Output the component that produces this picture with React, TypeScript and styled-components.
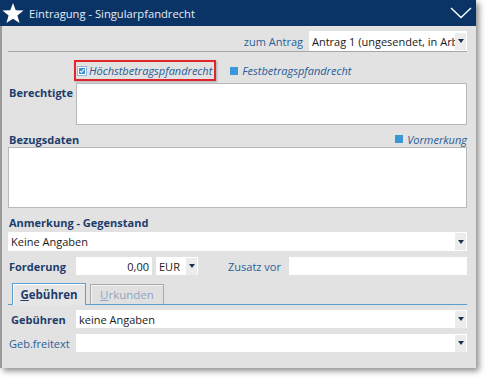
import React from "react";
import styled, { createGlobalStyle } from "styled-components";

const Global = createGlobalStyle`
  html, body { margin: 0; padding: 0; background: #ffffff; }
  body { font-family: "Open Sans", "Noto Sans", sans-serif; }
  * { box-sizing: border-box; }
`;

const Page = styled.div`
  width: 488px;
  height: 380px;
  overflow: hidden;
`;

const Window = styled.div`
  width: 476px;
  height: 368px;
  background: #e2e2e2;
  border-left: 2px solid #9a9a9a;
  box-shadow: 3px 3px 6px rgba(0, 0, 0, 0.45);
  display: flex;
  flex-direction: column;
`;

const Header = styled.div`
  height: 26px;
  flex: none;
  background: #0b3466;
  margin-left: -2px;
  display: flex;
  align-items: center;
  padding: 0 4px 0 2px;
  color: #e4ecf6;
`;

const Title = styled.span`
  font-size: 11.2px;
  margin-left: 5px;
  flex: 1;
`;

const Body = styled.div`
  padding: 5px 9px 0 6px;
  display: flex;
  flex-direction: column;
`;

const TopRow = styled.div`
  display: flex;
  justify-content: flex-end;
  align-items: center;
  gap: 6px;
  height: 21px;
  border-bottom: 1px solid #a6a6a6;
`;

const BlueText = styled.span`
  color: #2a5f98;
  font-size: 11px;
`;

const SelectBox = styled.div<{ $w?: string; $h?: number; $ml?: number }>`
  width: ${(p) => p.$w ?? "auto"};
  flex: ${(p) => (p.$w ? "none" : "1")};
  height: ${(p) => p.$h ?? 19}px;
  margin-left: ${(p) => p.$ml ?? 0}px;
  background: #ffffff;
  display: flex;
  align-items: center;
  font-size: 11px;
  color: #1a1a1a;
  overflow: hidden;
  white-space: nowrap;
`;

const SelectText = styled.span`
  flex: 1;
  min-width: 0;
  padding-left: 3px;
  overflow: hidden;
`;

const DropBtn = styled.span`
  flex: none;
  width: 11px;
  height: 17px;
  margin-right: 1px;
  background: #ececec;
  display: flex;
  align-items: center;
  justify-content: center;
  &::after {
    content: "";
    border-left: 3px solid transparent;
    border-right: 3px solid transparent;
    border-top: 4px solid #1e3350;
  }
`;

const OptionRow = styled.div`
  display: flex;
  align-items: center;
  margin-top: 8px;
  padding-left: 66px;
  height: 21px;
`;

const Highlight = styled.div`
  border: 2px solid #e0262b;
  height: 21px;
  display: flex;
  align-items: center;
  padding: 0 2px 0 0;
  box-shadow: 1px 1px 2px rgba(0, 0, 0, 0.25);
`;

const CheckBox = styled.span`
  width: 8px;
  height: 8px;
  background: #3a8fd0;
  border: 1px solid #ffffff;
  outline: 1px solid #8fb7dc;
  display: inline-flex;
  align-items: center;
  justify-content: center;
  margin: 0 3px 0 2px;
`;

const Square = styled.span`
  width: 8px;
  height: 8px;
  background: #3a98d6;
  display: inline-block;
  margin-right: 4px;
`;

const Italic = styled.span`
  font-style: italic;
  color: #245c98;
  font-size: 11px;
`;

const Option = styled.div<{ $ml?: number }>`
  display: flex;
  align-items: center;
  margin-left: ${(p) => p.$ml ?? 0}px;
`;

const Label = styled.span<{ $bold?: boolean }>`
  font-size: 11px;
  font-weight: ${(p) => (p.$bold ? 700 : 400)};
  color: ${(p) => (p.$bold ? "#1d3d6c" : "#2a5f98")};
  white-space: nowrap;
`;

const FieldRow = styled.div<{ $h: number; $mt: number; $top?: boolean }>`
  display: flex;
  align-items: ${(p) => (p.$top ? "flex-start" : "center")};
  height: ${(p) => p.$h}px;
  margin-top: ${(p) => p.$mt}px;
`;

const LabelCell = styled.div<{ $w?: number; $pt?: number; $ml?: number; $pl?: number }>`
  width: ${(p) => p.$w ?? 68}px;
  flex: none;
  padding-left: ${(p) => p.$pl ?? 1}px;
  margin-left: ${(p) => p.$ml ?? 0}px;
  padding-top: ${(p) => p.$pt ?? 0}px;
  line-height: 14px;
`;

const TextArea = styled.div<{ $h: number }>`
  flex: 1;
  height: ${(p) => p.$h}px;
  background: #ffffff;
  border: 1px solid #b8b8b8;
`;

const SectionHead = styled.div<{ $mt: number }>`
  display: flex;
  align-items: center;
  justify-content: space-between;
  padding-left: 1px;
  margin-top: ${(p) => p.$mt}px;
  height: 16px;
`;

const Input = styled.div<{ $w?: string; $right?: boolean }>`
  width: ${(p) => p.$w ?? "auto"};
  flex: ${(p) => (p.$w ? "none" : "1")};
  height: 18px;
  background: #ffffff;
  font-size: 11px;
  color: #1a1a1a;
  display: flex;
  align-items: center;
  justify-content: ${(p) => (p.$right ? "flex-end" : "flex-start")};
  padding: 0 3px;
`;

const TabBar = styled.div`
  display: flex;
  align-items: flex-end;
  gap: 4px;
  margin-top: 8px;
  padding-left: 4px;
  height: 22px;
  border-bottom: 1px solid #5aa0cf;
`;

const Tab = styled.div<{ $active?: boolean }>`
  width: 74px;
  height: ${(p) => (p.$active ? "22px" : "20px")};
  border: 1px solid ${(p) => (p.$active ? "#5aa0cf" : "#a9a9a9")};
  border-bottom: none;
  background: ${(p) => (p.$active ? "#e6e6e6" : "#e0e0e0")};
  box-shadow: ${(p) => (p.$active ? "inset 1px 1px 0 #ffffff" : "inset 1px 1px 0 #f2f2f2")};
  font-size: 11.5px;
  font-weight: ${(p) => (p.$active ? 700 : 400)};
  color: ${(p) => (p.$active ? "#1d3d6c" : "#8fa6c2")};
  display: flex;
  align-items: center;
  justify-content: center;
  margin-bottom: ${(p) => (p.$active ? "-1px" : "0")};
  u { text-decoration: underline; }
`;

const Star = () => (
  <svg width="22" height="22" viewBox="0 0 24 24">
    <polygon
      points="12,1 15,9 23.5,9.3 16.8,14.6 19.2,23 12,18.2 4.8,23 7.2,14.6 0.5,9.3 9,9"
      fill="#ffffff"
    />
  </svg>
);

const Chevron = () => (
  <svg width="22" height="12" viewBox="0 0 22 12">
    <polyline points="1,1 11,10.5 21,1" fill="none" stroke="#ffffff" strokeWidth="1.4" />
  </svg>
);

const Tick = () => (
  <svg width="8" height="8" viewBox="0 0 8 8">
    <polyline points="1.2,4 3.2,6 6.8,1.6" fill="none" stroke="#ffffff" strokeWidth="1.4" />
  </svg>
);

export default function App() {
  return (
    <Page>
      <Global />
      <Window>
        <Header>
          <Star />
          <Title>Eintragung - Singularpfandrecht</Title>
          <Chevron />
        </Header>
        <Body>
          <TopRow>
            <BlueText>zum Antrag</BlueText>
            <SelectBox $w="158px" $h={20}>
              <SelectText>Antrag 1 (ungesendet, in Arbeit)</SelectText>
              <DropBtn />
            </SelectBox>
          </TopRow>

          <OptionRow>
            <Highlight>
              <CheckBox>
                <Tick />
              </CheckBox>
              <Italic>Höchstbetragspfandrecht</Italic>
            </Highlight>
            <Option $ml={14}>
              <Square />
              <Italic>Festbetragspfandrecht</Italic>
            </Option>
          </OptionRow>

          <FieldRow $h={42} $mt={2} $top>
            <LabelCell $pt={1}>
              <Label $bold>Berechtigte</Label>
            </LabelCell>
            <TextArea $h={42} />
          </FieldRow>

          <SectionHead $mt={6}>
            <Label $bold>Bezugsdaten</Label>
            <Option>
              <Square />
              <Italic>Vormerkung</Italic>
            </Option>
          </SectionHead>
          <FieldRow $h={61} $mt={0}>
            <TextArea $h={61} />
          </FieldRow>

          <SectionHead $mt={6}>
            <Label $bold>Anmerkung - Gegenstand</Label>
          </SectionHead>
          <FieldRow $h={19} $mt={2}>
            <SelectBox>
              <SelectText>Keine Angaben</SelectText>
              <DropBtn />
            </SelectBox>
          </FieldRow>

          <FieldRow $h={18} $mt={6}>
            <LabelCell>
              <Label $bold>Forderung</Label>
            </LabelCell>
            <Input $w="76px" $right>
              0,00
            </Input>
            <SelectBox $w="42px" $h={18} $ml={4}>
              <SelectText>EUR</SelectText>
              <DropBtn />
            </SelectBox>
            <LabelCell $w={62} $ml={29}>
              <Label>Zusatz vor</Label>
            </LabelCell>
            <Input />
          </FieldRow>

          <TabBar>
            <Tab $active>
              <span>
                <u>G</u>ebühren
              </span>
            </Tab>
            <Tab>
              <span>
                <u>U</u>rkunden
              </span>
            </Tab>
          </TabBar>

          <FieldRow $h={18} $mt={5}>
            <LabelCell $pl={3}>
              <Label $bold>Gebühren</Label>
            </LabelCell>
            <SelectBox $h={18}>
              <SelectText>keine Angaben</SelectText>
              <DropBtn />
            </SelectBox>
          </FieldRow>
          <FieldRow $h={18} $mt={6}>
            <LabelCell>
              <Label>Geb.freitext</Label>
            </LabelCell>
            <SelectBox $h={18}>
              <SelectText />
              <DropBtn />
            </SelectBox>
          </FieldRow>
        </Body>
      </Window>
    </Page>
  );
}
